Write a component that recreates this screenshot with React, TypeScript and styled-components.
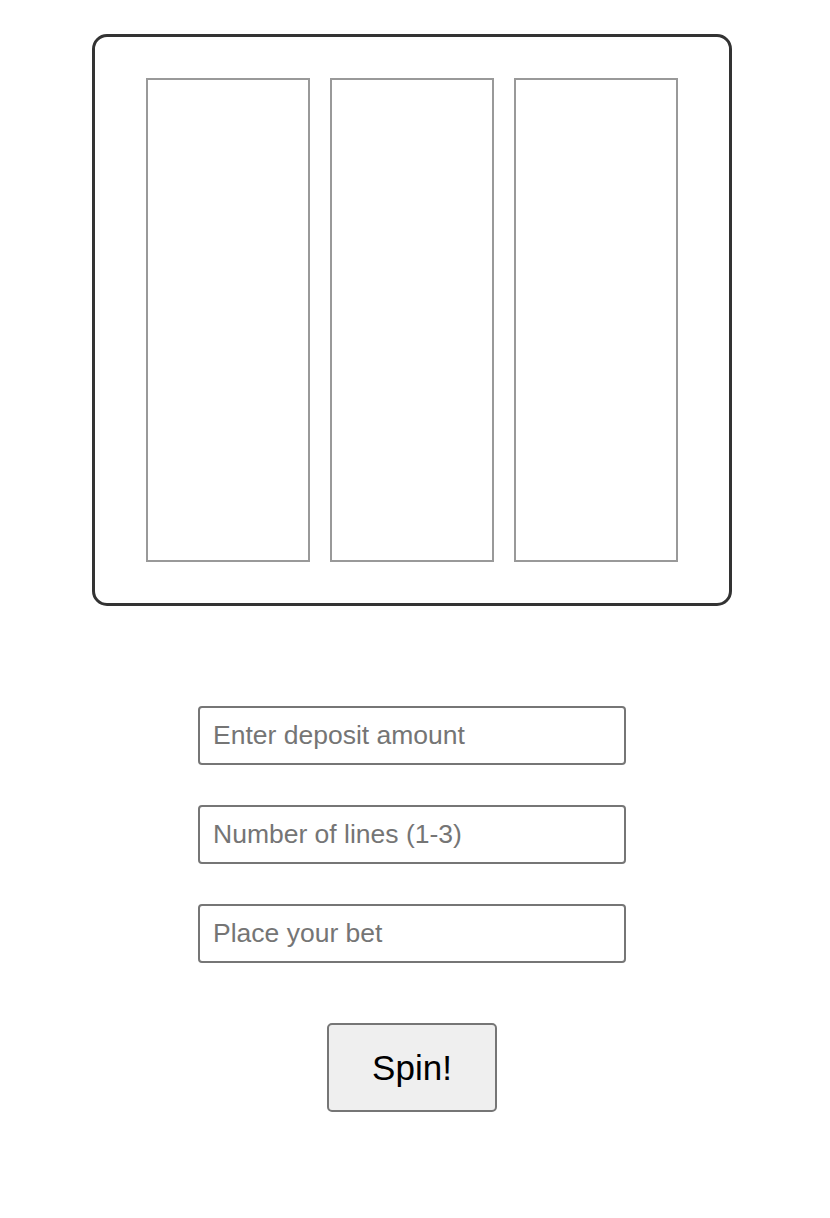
import React from 'react';
import styled, { createGlobalStyle } from 'styled-components';

const GlobalStyle = createGlobalStyle`
  body {
    margin: 0;
    background: #ffffff;
    font-family: "Liberation Sans", Arial, sans-serif;
  }
`;

// ==========================================================
// Styled Components
// ==========================================================

const Page = styled.div`
  width: 824px;
  padding-top: 34px;
  display: flex;
  flex-direction: column;
  align-items: center;
`;

const Machine = styled.div`
  box-sizing: border-box;
  width: 640px;
  height: 572px;
  border: 3px solid #333;
  border-radius: 15px;
  display: flex;
  justify-content: center;
  align-items: center;
  gap: 20px;
`;

const Reel = styled.div`
  box-sizing: border-box;
  width: 164px;
  height: 484px;
  border: 2px solid #999;
`;

const Controls = styled.div`
  margin-top: 100px;
  display: flex;
  flex-direction: column;
  align-items: center;
  gap: 40px;
`;

const Field = styled.input`
  box-sizing: border-box;
  width: 428px;
  height: 59px;
  padding: 0 13px;
  border: 2px solid #767676;
  border-radius: 4px;
  font-family: "Liberation Sans", Arial, sans-serif;
  font-size: 26.5px;
  color: #222;
  background: #fff;
  outline: none;

  &::placeholder {
    color: #757575;
  }
`;

const SpinButton = styled.button`
  box-sizing: border-box;
  margin-top: 60px;
  width: 170px;
  height: 89px;
  border: 2px solid #767676;
  border-radius: 5px;
  background: #efefef;
  color: #000;
  font-family: "Liberation Sans", Arial, sans-serif;
  font-size: 35px;
  cursor: pointer;
`;

// ==========================================================
// Component
// ==========================================================

const fields = ['Enter deposit amount', 'Number of lines (1-3)', 'Place your bet'];

export default function App() {
  return (
    <>
      <GlobalStyle />
      <Page>
        <Machine>
          {[0, 1, 2].map((i) => (
            <Reel key={i} />
          ))}
        </Machine>
        <Controls>
          {fields.map((f) => (
            <Field key={f} placeholder={f} />
          ))}
        </Controls>
        <SpinButton>Spin!</SpinButton>
      </Page>
    </>
  );
}
